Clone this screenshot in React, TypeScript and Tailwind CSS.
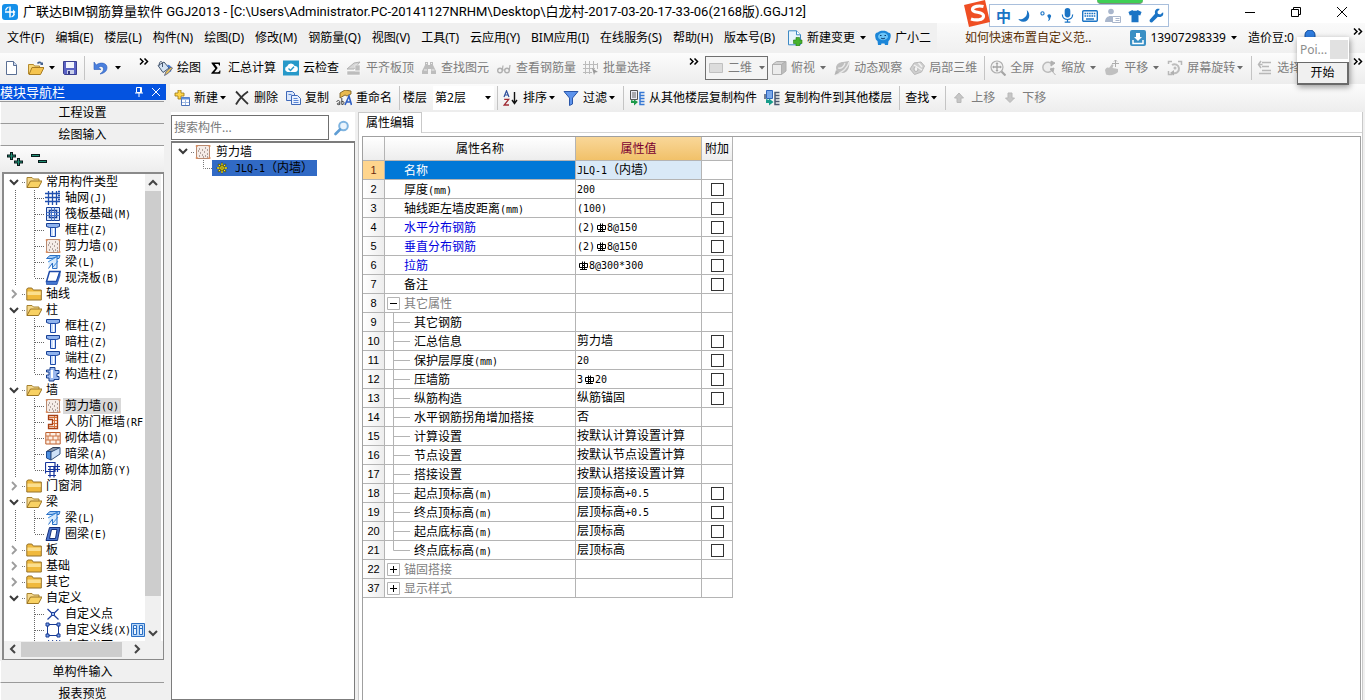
import React, { ReactNode } from "react";

/* ---------- text helpers ---------- */

/* Narrow fixed-pitch Latin beside 12px Chinese glyphs */
function Song({ children }: { children: string }) {
  const runs = children.split(/([\x21-\x7e]+|Φ)/).filter(Boolean);
  return (
    <>
      {runs.map((run, i) =>
        run === "Φ" ? (
          <Rebar key={i} />
        ) : /^[\x21-\x7e]+$/.test(run) ? (
          <span key={i} className="text-[10px] [font-family:'DejaVu_Sans_Mono',monospace]">{run}</span>
        ) : (
          <span key={i}>{run}</span>
        )
      )}
    </>
  );
}

function Rebar() {
  return (
    <svg viewBox="0 0 12 10" className="inline-block h-[10px] w-3 align-[-2px]" fill="none" stroke="#000">
      <path d="M2.500 2.500h8v4h-8zM5.500.5v8M7.500.5v8M3 8.500h7M5 4.500h3" />
    </svg>
  );
}

/* ---------- icons ---------- */

type IconName = keyof typeof icons;

const icons = {
  page: (
    <>
      <path d="M2.500 1.500h7l3 3.500v9.500h-10z" fill="#fff" stroke="#5a6f94" />
      <path d="M9.500 1.500v4h3.500" fill="#c7d6ee" stroke="#5a6f94" />
    </>
  ),
  open: (
    <>
      <path d="M9 3c1-2 4-2 5 0l1-1v3h-3l1-1c-1-1-2-1-3 0z" fill="#44618f" />
      <path d="M.5 14V4.500h5l1 1.500h5v2" fill="#f7d779" stroke="#b58a2c" />
      <path d="M1 14.500 4 7.500h12l-3.500 7z" fill="#f5c44f" stroke="#a97c22" />
    </>
  ),
  save: (
    <>
      <path d="M1.500 1.500h13v13h-12l-1-1z" fill="#5a62c4" stroke="#3b3f8f" />
      <path d="M4 2h8v6H4z" fill="#f2f4fc" />
      <path d="M5 10h7v4H5z" fill="#c9d0ea" />
      <path d="M6 11h2v3H6z" fill="#33377c" />
    </>
  ),
  undo: (
    <path d="M2 2v7.500h7L6.500 7.200c2.500-1.700 5-.6 5 1.800 0 2-1.500 3.500-3.500 5 4.500-.8 7-3 7-6.500C15 3 8.500 1.500 4.300 5z" fill="#4a80de" stroke="#2c5cb8" strokeWidth=".6" />
  ),
  paint: (
    <>
      <path d="M1 5.500 7 2l5 6-6 4.500z" fill="#d3e2f2" stroke="#44566f" />
      <path d="M2.500 5.500C1.500 2 4.500 0 5.500 3v4" fill="none" stroke="#44566f" />
      <path d="M10.500 5.500c3 .5 3.500 3 2.500 6" stroke="#3f78d0" strokeWidth="2.200" fill="none" />
      <path d="m15.500 8-4 5-4 2.500 1.500-4 5-4.500z" fill="#e8c15a" stroke="#4c5a88" strokeWidth=".8" />
    </>
  ),
  sigma: <path d="M3.500 2.500h8.500v3h-1c0-1-.5-1.500-1.500-1.500H6.700l3 4-3.300 4.200h3.400c1 0 1.500-.5 1.700-1.700h1l-.3 3.200H3.300v-.8L7.300 8.400 3.500 3.300z" fill="#000" />,
  cloud: (
    <>
      <path d="M0 .5h16v15H0z" fill="#2799c9" />
      <path d="M4.500 12a3 3 0 0 1-.3-5.800 4 4 0 0 1 7.500-.2 3 3 0 0 1 .3 6z" fill="#fff" />
      <path d="m5.500 8.500 2 2 3.500-3.700" fill="none" stroke="#2799c9" strokeWidth="1.400" />
    </>
  ),
  align: (
    <>
      <path d="m1 9 7-6 6-1-6 7z" fill="#d6d6d6" stroke="#b0b0b0" />
      <path d="M1 11h13v4H1zM9 5h5v6H9z" fill="#bdbdbd" stroke="#fff" strokeWidth=".5" />
    </>
  ),
  binoculars: (
    <>
      <path d="M4 2h3v3h2V2h3v3l3 6v3h-5V9H7v5H1v-3l3-6z" fill="#bdbdbd" />
      <path d="M3 10h3M10.500 10h3M5 3.500h1M10 3.500h1" stroke="#eee" />
    </>
  ),
  glasses: (
    <>
      <circle cx="4" cy="10.500" r="2.300" stroke="#b0b0b0" strokeWidth="1.400" />
      <circle cx="11" cy="10.500" r="2.300" stroke="#b0b0b0" strokeWidth="1.400" />
      <path d="M6.300 10.500 7 5.500M13.300 10.500 14 5M6 10h3" stroke="#b0b0b0" strokeWidth="1.200" />
    </>
  ),
  batch: (
    <>
      <path d="M2.500 1v13M6.500 1v13M10.500 1v9M0 4.500h15M0 8.500h12M0 12.500h9M14.500 3v6" stroke="#bbb" fill="none" />
      <path d="m9 8 6 4-3 .5L11 15z" fill="#999" />
    </>
  ),
  rect: <path d="M1.500 3.500h13v9h-13z" fill="#dcdcdc" stroke="#c0c0c0" />,
  cube: (
    <>
      <path d="M1.500 4.500h9v10h-9z" fill="#ececec" stroke="#b0b0b0" />
      <path d="m1.500 4.500 4-3h9.500l-4.500 3z" fill="#d0d0d0" stroke="#b0b0b0" />
      <path d="m10.500 4.500 4.500-3v9.500l-4.500 3.500z" fill="#bcbcbc" stroke="#b0b0b0" />
    </>
  ),
  orbit: (
    <>
      <path d="M2 8c0-4 4-6 7-6l6-1c1 4 0 12-7 12H3z" fill="#bebebe" />
      <path d="M1 15c4-1 12-5 14-13M4 8c3 1 6-1 7-5" fill="none" stroke="#e9e9e9" strokeWidth="1.300" />
      <path d="M.5 15 2 10l3 3z" fill="#b3b3b3" />
    </>
  ),
  local3d: (
    <>
      <path d="m1 9 4-6 7-1 3.500 4-3 6-7 2.500z" fill="#cfcfcf" stroke="#b8b8b8" />
      <ellipse cx="7" cy="9" rx="2" ry="2.500" fill="#f4f4f4" stroke="#b3b3b3" />
      <path d="m5 5 8 5M9.500 3 13 7" fill="none" stroke="#f3f3f3" strokeWidth="1.300" />
    </>
  ),
  fullscreen: (
    <>
      <circle cx="7" cy="7" r="6" fill="#f4f4f4" stroke="#b0b0b0" strokeWidth="1.200" />
      <path d="M7 3v8M3 7h8" stroke="#a5a5a5" strokeWidth="1.300" />
      <path d="m5.500 4 1.500-2 1.500 2zM5.500 10 7 12l1.500-2zM4 5.500 2 7l2 1.500zM10 5.500 12 7l-2 1.500z" fill="#a5a5a5" />
      <path d="m11.500 11.500 4 4" stroke="#a5a5a5" strokeWidth="2.200" />
    </>
  ),
  zoom: (
    <>
      <path d="M11 4.500A5 5 0 1 0 11 10" fill="#ededed" stroke="#bcbcbc" strokeWidth="1.500" />
      <path d="m10 1 4 2-4 3zM9 9l4-1-1 4zM10.500 10.500l4 4.500" fill="#b0b0b0" stroke="#b0b0b0" />
    </>
  ),
  pan: (
    <>
      <path d="M1 10c1-2 2-3 4-2l3-4 1.500 1L8.500 8 14 9v3c-2 3-9 4-12 2.500z" fill="#c0c0c0" />
      <path d="M11.500 0v7M8 3.500h7M10 1.500 11.500 0 13 1.500" stroke="#adadad" fill="none" />
    </>
  ),
  rotate: (
    <>
      <path d="M1.500 4V1.500H5M11 1.500h3.500V5M1.500 11v3.500h4" fill="none" stroke="#b8b8b8" strokeWidth="1.500" />
      <path d="M5 5a4.500 4.500 0 1 1 1 8" fill="none" stroke="#bdbdbd" strokeWidth="2" />
      <path d="m7 10-4 3 4 2.500z" fill="#b0b0b0" />
      <circle cx="8" cy="8" r="1.500" fill="#bdbdbd" />
    </>
  ),
  select: <path d="M5 2.500h9M5 6.500h7M5 10.500h9M2 13.500h12M4 1 1.500 4.500 4 8M1.500 4.500h4" fill="none" stroke="#b8b8b8" strokeWidth="1.500" />,
  create: (
    <>
      <path d="M4 0h3v3h3v3H7v3H4V6H1V3h3z" fill="#ffd54a" stroke="#9a7610" strokeWidth=".8" />
      <path d="M7.500 7.500h8v8h-8z" fill="#fff" stroke="#4c72b8" />
      <path d="M7.500 7.500h8v2h-8z" fill="#5f8fdc" />
      <path d="M8 12.500h7M11.500 10v5" stroke="#9db8e4" />
    </>
  ),
  remove: <path d="M2 1.500c3 3 7 8 12 12.500M14 1.500C9 5 5 9 2 14.500" fill="none" stroke="#333" strokeWidth="1.800" />,
  copy: (
    <>
      <path d="M1.500 1.500h6l2 2v7h-8z" fill="#dbe7fb" stroke="#3e68b8" />
      <path d="M6.500 5.500h6l3 3v6h-9z" fill="#e9f1ff" stroke="#3e68b8" />
      <path d="M8.500 8.500h4M8.500 10.500h5M8.500 12.500h5M3.500 4.500h3" stroke="#5b86d4" />
    </>
  ),
  rename: (
    <>
      <path d="M4 3 9 0l6 1v3l-4 2-2-1-5 3z" fill="#e8b94f" stroke="#6e5418" strokeWidth=".8" />
      <path d="M.8 12c0-2 3-2 3 0v2.500c-3 .8-4-1.500 0-1.500M5.800 8v6.500c3 .5 3-4 0-3" fill="none" stroke="#444" />
      <path d="M9 15 13 6l2.500 9M10 12h5" fill="none" stroke="#2f5fc4" strokeWidth="1.600" />
    </>
  ),
  sort: (
    <>
      <path d="M1 7 3.500.8 6 7M2 5h3" fill="none" stroke="#2f4f9c" strokeWidth="1.200" />
      <path d="M1.200 9.300h4.500L1.200 15h4.800" fill="none" stroke="#a02c34" strokeWidth="1.300" />
      <path d="M11.500 2v11M9 10l2.500 3.500L14 10" fill="none" stroke="#111" strokeWidth="1.400" />
    </>
  ),
  filter: <path d="M1 1.500h14L9.500 8v6l-3 1.500V8z" fill="#5d93ec" stroke="#2a56a8" />,
  fromFloor: (
    <>
      <path d="M1.500.5h7v9h-7z" fill="#ececf4" stroke="#555" />
      <path d="M3 3h4M3 5h4M3 7h4" stroke="#666" />
      <path d="M15.500 2.500H11v12h4.500M11 5.500h4.500M11 8.500h4.500M11 11.500h4.500" stroke="#3678d4" strokeWidth="1.500" fill="none" />
      <path d="M2 10v3h3v2.500L9 12 5 9.500V11z" fill="#1d9a4a" />
    </>
  ),
  toFloor: (
    <>
      <path d="M2.500.5h6v8h-6z" fill="#7ba8ea" stroke="#2f66bd" />
      <path d="M1 4v5M15.500 2.500H11v12h4.500M11 5.500h4.500M11 8.500h4.500M11 11.500h4.500" stroke="#4a5870" strokeWidth="1.500" fill="none" />
      <path d="M2 9v4h3v2.500L9.500 12 5 8.500V10z" fill="#189c8b" />
    </>
  ),
  up: <path d="M8 3 3.500 8H6v4.500h4V8h2.500z" fill="#c6c6c6" stroke="#b8b8b8" />,
  down: <path d="M8 12.500 3.500 8H6V3h4v5h2.500z" fill="#c6c6c6" stroke="#b8b8b8" />,
  change: (
    <>
      <path d="M1.500.8h8l4 4v10h-12z" fill="#e8f4fc" stroke="#3d89c4" />
      <path d="M9.500.8v4h4" fill="#fff" stroke="#3d89c4" />
      <path d="M9 7.500h3.500V10H15v3.500h-2.500V16H9v-2.500H6.500V10H9z" fill="#46b32d" stroke="#237a12" strokeWidth=".6" />
    </>
  ),
  mascot: (
    <>
      <path d="M3 2.500C4 0 12 0 13 2.500c3 0 3 3 2.500 5-.5 2-1 3-2 3.500L13 15h-3l-.5-1.500h-3L6 15H3l-.5-4C1 10 .5 9 .3 7 0 5 0 2.500 3 2.500z" fill="#1c86d8" />
      <ellipse cx="8" cy="6.500" rx="5" ry="3.700" fill="#6cc3f6" />
      <path d="M5 5.500h1.500M9.500 5.500H11M6 8c1 1 3 1 4 0" stroke="#0b3a6b" fill="none" />
    </>
  ),
  user: (
    <>
      <rect width="16" height="16" rx="2" fill="#3a8fc4" />
      <path d="M6 3h4v4h2l-4 4-4-4h2z" fill="#fff" />
      <path d="M3 10v3.500h10V10" fill="none" stroke="#fff" strokeWidth="1.500" />
    </>
  ),
  folderOpen: (
    <>
      <path d="M1 13.500v-10h5l1.500 1.500H13v3" fill="#f6d98c" stroke="#a5812f" />
      <path d="m1 13.500 3.500-6.500H16l-3.500 6.500z" fill="#f8d163" stroke="#9c7625" />
    </>
  ),
  folder: (
    <>
      <path d="M.8 14V3l1-1h4l1.500 2h8v10z" fill="#f0b93c" stroke="#96722a" />
      <path d="M1.500 5.500h13.200v3.500H1.500z" fill="#fbdf8f" />
    </>
  ),
  grid: <path d="M3.500 1v14M7.500 1v14M11.500 1v14M0 3.500h15M0 7.500h15M0 11.500h15M13 1.500h2M13 5.500h2M13 9.500h2" fill="none" stroke="#1f4fae" strokeWidth="1.300" />,
  raft: (
    <>
      <path d="M1.500 1.500h13v13h-13z" fill="#dbe8fb" stroke="#173f94" />
      <path d="M4.500 4.500h7v7h-7z" fill="#fff" stroke="#173f94" strokeWidth="1.500" />
      <path d="M6.500 1.500v13M9.500 1.500v13M1.500 6.500h13M1.500 9.500h13" stroke="#4472c8" />
    </>
  ),
  column: (
    <>
      <path d="M1.500 1.500h13v3l-3 1h-7l-3-1z" fill="#8fb3ee" stroke="#173f94" />
      <path d="M5.500 5.500h5v9h-5z" fill="#cfe0fb" stroke="#1c4bab" />
      <path d="M8.500 6v8" stroke="#fff" />
    </>
  ),
  wall: (
    <>
      <path d="M1.500 1.500h13v13h-13z" fill="#f5ece7" stroke="#b98a70" />
      <path d="M4 12h1M7 11h1M10 12h1M12 10h1M5 9h1M9 8h1M12 6h1M7 6h1M4 5h1M10 4h1M3 7h1M8 13h1M12 13h1" stroke="#6c5a55" />
      <path d="M.8 2h2M.8 14h2M13.500 2h2M13.500 14h2" stroke="#e08b55" strokeWidth="1.500" />
    </>
  ),
  beam: (
    <>
      <path d="M1.500 4.500 5 1.500h10l-1 3z" fill="#a5cdf7" stroke="#2a6fc4" />
      <path d="M4 4.500h3l5-2v12h-4.500V9l-4 5.500" fill="#d8eafc" stroke="#2a6fc4" />
      <path d="m3 8 10-6M8 13l5-6" stroke="#3f8fe0" />
    </>
  ),
  slab: (
    <>
      <path d="M4.500 1.500h10.500l-3.500 10H1.500z" fill="#fff" stroke="#1e4aa8" strokeWidth="1.500" />
      <path d="M1.500 11.500h10l3.500-10v4l-3 9H1.500z" fill="#4476cf" stroke="#1e4aa8" strokeWidth=".7" />
    </>
  ),
  structCol: (
    <>
      <path d="M5 1.500h5v3h4v3h-2v3h2v3H9v1.500H4v-3H1.500v-3H4v-3H1.500V4H5z" fill="#9db9ee" stroke="#163e8e" />
      <path d="M6 4h2v8H6z" fill="#fff" />
    </>
  ),
  airDoor: (
    <>
      <path d="M3.500 1.500h9v13h-9v-4h4v-5h-4z" fill="#fff2e6" stroke="#a83f12" strokeWidth="1.300" />
      <path d="M4 3.500h8M4 12.500h8M9.500 2v12M8 6.500h4M8 9.500h4" stroke="#d5703a" />
    </>
  ),
  brick: (
    <>
      <path d="M.8 2.500h14.400v11.500H.8z" fill="#fdf0e6" stroke="#bd5e2c" />
      <path d="M.8 6h14.400M.8 10h14.400M5 2.500V6M11 2.500V6M8 6v4M13 6v4M3 6v4M5 10v4M11 10v4" stroke="#cd7444" />
    </>
  ),
  darkBeam: (
    <>
      <path d="M1.500 5.500 8 1.500h7l-6 4z" fill="#8794a8" stroke="#303c52" />
      <path d="M1.500 5.500H6v8.500l-4.500-2z" fill="#4c8fe0" stroke="#1f4a92" />
      <path d="m6 6 9-4.500V8l-9 6z" fill="#cfe1f7" stroke="#35507c" />
    </>
  ),
  brickBar: (
    <path d="M.5.500v11M.5.500H10v9H.5M5 4v11.500M9 4v11.500M3 4.500h12M3 7.500h12M3 13.500h8M12.500 2v8" fill="none" stroke="#16349c" strokeWidth="1.200" />
  ),
  ringBeam: (
    <>
      <path d="M4.500 1.500h10.500l-2.500 13H1z" fill="#4c74cc" stroke="#142f7a" />
      <path d="M6.500 3.500H12l-1.500 9H4.500z" fill="#fff" stroke="#142f7a" />
    </>
  ),
  point: (
    <>
      <path d="m2.500 3 11 10.500M13.500 3 2.500 13.500" stroke="#1f3f9c" strokeWidth="1.200" />
      <path d="M6.500 6.500h3v3h-3z" fill="#9bc0f5" stroke="#1f3f9c" />
    </>
  ),
  line: (
    <>
      <path d="M2.500 2.500h11v11h-11z" fill="none" stroke="#183b94" />
      <path d="M1 1h3v3H1zM12 1h3v3h-3zM1 12h3v3H1zM12 12h3v3h-3z" fill="#7fa7ea" stroke="#183b94" />
    </>
  ),
  hatch: <path d="m1 6 3-4M5 6l3-4M9 6l3-4M13 6l2-4M1 10 4 6" stroke="#183b94" fill="none" />,
  gear: (
    <>
      <path d="M8 1v14M1 8h14M3 3l10 10M13 3 3 13" stroke="#2c2c00" strokeWidth="2.800" />
      <path d="M8 1.500v13M1.500 8h13M3.500 3.500l9 9M12.500 3.500l-9 9" stroke="#fff02e" strokeWidth="1.700" />
      <circle cx="8" cy="8" r="3" fill="#fff02e" stroke="#2c2c00" />
      <circle cx="8" cy="8" r="1" fill="#2c2c00" />
    </>
  ),
  search: (
    <>
      <circle cx="9.500" cy="6" r="4.300" fill="#eaf4fd" stroke="#7fb4e0" strokeWidth="2" />
      <path d="m6 9.500-4.500 4.500" stroke="#5f9dd4" strokeWidth="2.600" strokeLinecap="round" />
    </>
  ),
  appLogo: (
    <>
      <rect width="16" height="16" rx="3" fill="#1590ea" />
      <path d="M8 2.500v11M3 8h9" fill="none" stroke="#fff" strokeWidth="1.500" />
      <path d="M12.500 9.500A5 5 0 0 1 9.500 13M3.500 6.500A5 5 0 0 1 6.500 3" fill="none" stroke="#fff" strokeWidth="1.300" />
      <path d="m11 5.500 2.500 2.500-2.500 2.500z" fill="#fff" />
    </>
  ),
  moon: <path d="M10 1c5 4 3.500 13.500-4 13.500-3 0-5-1.500-5.500-3C6 12.500 12 8 10 1z" fill="#1b74c5" />,
  punct: (
    <>
      <circle cx="4" cy="5" r="1.800" fill="none" stroke="#1b74c5" strokeWidth="1.300" />
      <path d="M9.500 8a2.200 2.200 0 1 1 3.500 2c0 2-1 3.500-3 4 1-1.200 1.300-2.200 1-3.500z" fill="#1b74c5" />
    </>
  ),
  mic: (
    <>
      <rect x="5" y="0" width="6" height="10" rx="3" fill="#1b74c5" />
      <path d="M2.500 7c0 7 11 7 11 0M8 12v3M5 15h6" fill="none" stroke="#1b74c5" strokeWidth="1.300" />
    </>
  ),
  keyboard: (
    <>
      <rect x=".7" y="2.700" width="14.600" height="10.600" rx="1" fill="#fff" stroke="#1b74c5" strokeWidth="1.400" />
      <path d="M2.500 5.500h11M2.500 8h11" stroke="#1b74c5" strokeWidth="1.600" strokeDasharray="1.600 .7" />
      <path d="M4 11h8" stroke="#1b74c5" strokeWidth="1.500" />
    </>
  ),
  person: (
    <>
      <circle cx="6" cy="3.500" r="2.800" fill="#a9b6cc" />
      <path d="M0 14c0-8 11-8 12 0z" fill="#a9b6cc" />
      <path d="M7.500 8.500h8v6h-8z" fill="#fff" stroke="#a9b6cc" />
      <path d="M10.500 10.500h4M10.500 12.500h4" stroke="#a9b6cc" />
    </>
  ),
  shirt: <path d="M5 1c1 1.500 5 1.500 6 0l4.500 2.500-1.500 4-2-.7V15H4V6.800l-2 .7-1.500-4z" fill="#1b74c5" />,
  wrench: <path d="M15 4.500 12 7 9.500 6 9 4l2.500-3C8 0 5.500 2.500 6.500 6L.8 12.500c-.8 2 1 3.500 2.700 2.700L9.500 9.300c4 1 6.500-1.300 5.500-4.800z" fill="#1b74c5" />,
};

function Icon({ name, className = "h-4 w-4" }: { name: IconName; className?: string }) {
  return (
    <svg viewBox="0 0 16 16" className={`shrink-0 ${className}`} fill="none" aria-hidden="true">
      {icons[name]}
    </svg>
  );
}

function Caret({ dim = false }: { dim?: boolean }) {
  return (
    <svg viewBox="0 0 8 4" className="h-1 w-2 shrink-0" aria-hidden="true">
      <path d="M1 0h6L4 3.500z" fill={dim ? "#6b6b6b" : "#000"} />
    </svg>
  );
}

function More() {
  return (
    <button aria-label="更多" className="flex h-3 w-3 shrink-0 items-center self-start">
      <svg viewBox="0 0 10 7" className="h-[7px] w-[10px]" fill="none" stroke="#000" strokeWidth="1.500">
        <path d="m1 .5 3 3-3 3M5.500.5l3 3-3 3" />
      </svg>
    </button>
  );
}

const Sep = () => <span className="-mr-0.5 h-6 w-px shrink-0 bg-[#c4c4c4]" />;

function Tool({ icon, label, menu, dim, tight }: { icon?: IconName; label: string; menu?: boolean; dim?: boolean; tight?: boolean }) {
  return (
    <button className={`flex shrink-0 items-center whitespace-nowrap ${dim ? "text-[#7d7d7d]" : "text-black"}`}>
      {icon && <Icon name={icon} className="mr-1 h-4 w-4" />}
      {label}
      {menu && (
        <span className={tight ? "ml-px" : "ml-1"}>
          <Caret dim={dim} />
        </span>
      )}
    </button>
  );
}

/* ---------- top bars ---------- */

function TitleBar() {
  return (
    <header className="flex h-[23px] shrink-0 items-center bg-white pl-0.5">
      <Icon name="appLogo" />
      <h1 className="ml-[5px] whitespace-nowrap text-[13px] font-normal [font-family:'Roboto','Noto_Sans_CJK_SC',sans-serif]">
        广联达BIM钢筋算量软件 GGJ2013 - [C:\Users\Administrator.PC-20141127NRHM\Desktop\白龙村-2017-03-20-17-33-06(2168版).GGJ12]
      </h1>
      <div className="ml-auto flex">
        <button aria-label="最小化" className="flex h-5 w-[46px] items-center justify-center">
          <svg viewBox="0 0 10 10" className="h-[10px] w-[10px]" stroke="#000"><path d="M0 5.500h10" /></svg>
        </button>
        <button aria-label="还原" className="flex h-5 w-[46px] items-center justify-center">
          <svg viewBox="0 0 10 10" className="h-[10px] w-[10px]" stroke="#000" fill="none"><path d="M.5 2.500h7v7h-7zM2.500 2.500v-2h7v7h-2" /></svg>
        </button>
        <button aria-label="关闭" className="flex h-5 w-[46px] items-center justify-center">
          <svg viewBox="0 0 10 10" className="h-[10px] w-[10px]" stroke="#000" fill="none"><path d="m0 0 10 10M10 0 0 10" /></svg>
        </button>
      </div>
    </header>
  );
}

const menus = ["文件(F)", "编辑(E)", "楼层(L)", "构件(N)", "绘图(D)", "修改(M)", "钢筋量(Q)", "视图(V)", "工具(T)", "云应用(Y)", "BIM应用(I)", "在线服务(S)", "帮助(H)", "版本号(B)"];

function MenuBar() {
  return (
    <nav className="flex h-[30px] shrink-0 items-center bg-[#f0f0f0] pl-[7px]">
      <div className="flex shrink-0 items-center gap-[11px]">
        {menus.map((m) => (
          <button key={m} className="whitespace-nowrap">{m}</button>
        ))}
      </div>
      <div className="ml-3 flex shrink-0 items-center gap-2">
        <Tool icon="change" label="新建变更" menu />
        <Tool icon="mascot" label="广小二" />
      </div>
      <div className="ml-auto flex h-full w-[428px] shrink-0 items-center bg-linear-to-b from-[#fafafa] to-[#f0f0f0] pl-7">
        <a href="#help" className="whitespace-nowrap text-[#5a3005]">如何快速布置自定义范..</a>
        <div className="ml-auto flex items-center gap-[10px]">
          <Tool icon="user" label="13907298339" menu />
          <span className="whitespace-nowrap">造价豆:0</span>
          <svg viewBox="0 0 12 12" className="mr-[37px] h-3 w-3 self-start" aria-hidden="true">
            <path d="M1 12V5a5 5 0 0 1 10 0v7z" fill="#2f7de0" stroke="#114a96" />
          </svg>
        </div>
        <span className="flex h-full pt-0.5"><More /></span>
      </div>
    </nav>
  );
}

const bar = "bg-linear-to-b from-[#fcfcfc] to-[#ededed]";

function MainToolbar() {
  return (
    <div className={`flex h-[31px] shrink-0 items-center overflow-hidden pb-0.5 ${bar}`}>
      <div className="flex w-[157px] shrink-0 items-center pl-1">
        <button aria-label="新建"><Icon name="page" /></button>
        <button aria-label="打开" className="ml-2 flex items-center gap-1"><Icon name="open" /><Caret /></button>
        <button aria-label="保存" className="ml-1.5"><Icon name="save" /></button>
        <span className="mx-1.5 flex"><Sep /></span>
        <button aria-label="撤销" className="ml-0.5 flex items-center gap-1.5"><Icon name="undo" /><Caret /></button>
        <span className="ml-auto flex h-6 pr-1.5"><More /></span>
      </div>
      <div className="flex shrink-0 items-center gap-[7px]">
        <Tool icon="paint" label="绘图" />
        <Tool icon="sigma" label="汇总计算" />
        <Tool icon="cloud" label="云检查" />
        <Tool icon="align" label="平齐板顶" dim />
        <Tool icon="binoculars" label="查找图元" dim />
        <Tool icon="glasses" label="查看钢筋量" dim />
        <Tool icon="batch" label="批量选择" dim />
      </div>
      <span className="ml-[38px] flex h-6"><More /></span>
      <div className="ml-1 flex min-w-0 flex-1 items-center gap-[7px] overflow-hidden">
        <label className="-mr-1 flex h-6 w-[63px] shrink-0 items-center border border-[#6f6f6f] bg-[#f4f4f4] pl-0.5 pr-0.5 text-[#7d7d7d]">
          <Icon name="rect" className="mr-1 h-4 w-4" />
          <select aria-label="视图模式" className="w-[30px] shrink-0 appearance-none bg-transparent outline-none">
            <option>二维</option>
          </select>
          <Caret dim />
        </label>
        <Tool icon="cube" label="俯视" menu dim />
        <Tool icon="orbit" label="动态观察" dim />
        <Tool icon="local3d" label="局部三维" dim />
        <Sep />
        <Tool icon="fullscreen" label="全屏" dim />
        <Tool icon="zoom" label="缩放" menu dim />
        <Tool icon="pan" label="平移" menu dim />
        <Tool icon="rotate" label="屏幕旋转" menu dim tight />
        <Sep />
        <Tool icon="select" label="选择" dim />
      </div>
      <span className="ml-4 flex h-6"><More /></span>
    </div>
  );
}

function PartToolbar() {
  return (
    <div className={`flex h-7 shrink-0 items-center gap-[7px] overflow-hidden pl-1 ${bar}`}>
      <Tool icon="create" label="新建" menu tight />
      <Tool icon="remove" label="删除" />
      <Tool icon="copy" label="复制" />
      <Tool icon="rename" label="重命名" />
      <Sep />
      <label className="-ml-0.5 -mr-1 flex shrink-0 items-center">
        楼层
        <span className="ml-1.5 flex h-6 w-[61px] items-center bg-white pl-0.5">
          <select defaultValue="第2层" className="w-[49px] appearance-none bg-transparent outline-none">
            <option>第1层</option>
            <option>第2层</option>
          </select>
          <Caret />
        </span>
      </label>
      <Sep />
      <Tool icon="sort" label="排序" menu tight />
      <Tool icon="filter" label="过滤" menu tight />
      <Sep />
      <Tool icon="fromFloor" label="从其他楼层复制构件" />
      <Tool icon="toFloor" label="复制构件到其他楼层" />
      <Sep />
      <Tool label="查找" menu tight />
      <Sep />
      <Tool icon="up" label="上移" dim />
      <Tool icon="down" label="下移" dim />
    </div>
  );
}

/* ---------- navigation tree ---------- */

type Node = { label: string; open?: boolean; icon?: IconName; last?: boolean; selected?: boolean; badge?: boolean; lastGroup?: boolean };

const tree: Node[] = [
  { label: "常用构件类型", open: true },
  { label: "轴网(J)", icon: "grid" },
  { label: "筏板基础(M)", icon: "raft" },
  { label: "框柱(Z)", icon: "column" },
  { label: "剪力墙(Q)", icon: "wall" },
  { label: "梁(L)", icon: "beam" },
  { label: "现浇板(B)", icon: "slab", last: true },
  { label: "轴线", open: false },
  { label: "柱", open: true },
  { label: "框柱(Z)", icon: "column" },
  { label: "暗柱(Z)", icon: "column" },
  { label: "端柱(Z)", icon: "column" },
  { label: "构造柱(Z)", icon: "structCol", last: true },
  { label: "墙", open: true },
  { label: "剪力墙(Q)", icon: "wall", selected: true },
  { label: "人防门框墙(RF", icon: "airDoor" },
  { label: "砌体墙(Q)", icon: "brick" },
  { label: "暗梁(A)", icon: "darkBeam" },
  { label: "砌体加筋(Y)", icon: "brickBar", last: true },
  { label: "门窗洞", open: false },
  { label: "梁", open: true },
  { label: "梁(L)", icon: "beam" },
  { label: "圈梁(E)", icon: "ringBeam", last: true },
  { label: "板", open: false },
  { label: "基础", open: false },
  { label: "其它", open: false },
  { label: "自定义", open: true },
  { label: "自定义点", icon: "point", lastGroup: true },
  { label: "自定义线(X)", icon: "line", badge: true, lastGroup: true },
  { label: "自定义面", icon: "hatch", lastGroup: true },
];

function TreeRow({ node }: { node: Node }) {
  if (!node.icon) {
    return (
      <li>
        <button className="flex h-4 items-center whitespace-nowrap">
          <svg viewBox="0 0 22 16" className="h-4 w-[22px] shrink-0" fill="none" aria-hidden="true">
            <path d="M18 8.500h4" stroke="#777" strokeDasharray="1 1" />
            {node.open ? (
              <path d="m6 6 4 4 4-4" stroke="#3a3a3a" strokeWidth="2" />
            ) : (
              <path d="m8 4 4 4-4 4" stroke="#9c9c9c" strokeWidth="1.800" />
            )}
          </svg>
          <Icon name={node.open ? "folderOpen" : "folder"} className="mr-1 h-4 w-4" />
          <Song>{node.label}</Song>
        </button>
      </li>
    );
  }
  return (
    <li>
      <button className="flex h-4 items-center whitespace-nowrap">
        <svg viewBox="0 0 41 16" className="h-4 w-[41px] shrink-0" fill="none" stroke="#666" strokeDasharray="1 1" aria-hidden="true">
          {!node.lastGroup && <path d="M11.500 0v16" />}
          <path d={node.last ? "M30.500 0v8" : "M30.500 0v16"} />
          <path d="M31 8.500h10" />
        </svg>
        <Icon name={node.icon} className="mr-0.5 h-4 w-4" />
        <span className={`flex h-4 items-center px-0.5 ${node.selected ? "bg-[#d9d9d9]" : ""}`}>
          <span><Song>{node.label}</Song></span>
        </span>
        {node.badge && (
          <svg viewBox="0 0 14 14" className="-ml-0.5 h-[14px] w-[14px] shrink-0" aria-hidden="true">
            <path d="M.5.5h13v13H.5z" fill="#b9d7f8" stroke="#2a6fc4" />
            <path d="M2.500 2.500h3v9h-3zM8.500 2.500h3v9h-3zM2.500 5.500h3M8.500 5.500h3" fill="#eaf3fd" stroke="#2a6fc4" />
          </svg>
        )}
      </button>
    </li>
  );
}

function Chevron({ d }: { d: string }) {
  return (
    <svg viewBox="0 0 10 10" className="h-[10px] w-[10px]" fill="none" stroke="#444" strokeWidth="2" aria-hidden="true">
      <path d={d} />
    </svg>
  );
}

function PanelButton({ children }: { children: ReactNode }) {
  return (
    <button className="h-[22px] w-full shrink-0 border-b border-l border-[#9a9a9a] border-l-white bg-[#f0f0f0] text-center">{children}</button>
  );
}

function NavPanel() {
  return (
    <aside className="flex w-[166px] shrink-0 flex-col overflow-hidden">
      <div className="flex h-4 shrink-0 items-center bg-[#0453e0] leading-4 text-white">
        <h2 className="whitespace-nowrap text-[13px] font-normal">模块导航栏</h2>
        <button aria-label="固定" className="ml-auto">
          <svg viewBox="0 0 10 10" className="h-[10px] w-[10px]" fill="none" stroke="#fff" aria-hidden="true">
            <path d="M2.500.5h5v5h-5zM6.500 1v4M1 6h8M5 6v4" />
          </svg>
        </button>
        <button aria-label="关闭面板" className="ml-2 mr-1.5">
          <svg viewBox="0 0 8 8" className="h-2 w-2" stroke="#fff" aria-hidden="true"><path d="m0 0 8 8M8 0 0 8" /></svg>
        </button>
      </div>
      <div className="flex min-h-0 flex-1 flex-col pr-0.5">
        <div className="mt-px shrink-0 border-t border-[#9a9a9a]">
          <PanelButton>工程设置</PanelButton>
          <PanelButton>绘图输入</PanelButton>
        </div>
        <div className={`flex h-[26px] shrink-0 items-center gap-2 pl-[7px] ${bar}`}>
          <button aria-label="全部展开">
            <svg viewBox="0 0 16 16" className="h-4 w-4" fill="none" aria-hidden="true">
              <path d="M0 5h9M4.500 1v8M7 11h9M11.500 7v8" stroke="#0a1a1a" strokeWidth="3" />
              <path d="M1 5h7M4.500 2v6M8 11h7M11.500 8v6" stroke="#1f8f74" />
            </svg>
          </button>
          <button aria-label="全部折叠">
            <svg viewBox="0 0 16 16" className="h-4 w-4" fill="none" aria-hidden="true">
              <path d="M0 4.500h9M7 10.500h9" stroke="#0a1a1a" strokeWidth="3" />
              <path d="M1 4.500h7M8 10.500h7" stroke="#1f8f74" />
            </svg>
          </button>
        </div>
        <div className="ml-0.5 flex min-h-0 flex-1 flex-col border-2 border-r border-b border-[#8a8a8a] bg-white">
          <div className="flex min-h-0 flex-1">
            <ul className="min-w-0 flex-1 overflow-hidden">
              {tree.map((n, i) => <TreeRow key={i} node={n} />)}
            </ul>
            <div className="mr-0.5 flex w-4 shrink-0 flex-col items-center bg-[#f0f0f0]">
              <button aria-label="向上滚动" className="flex h-[17px] items-center"><Chevron d="m1 7 4-4 4 4" /></button>
              <div className="w-full flex-[404] bg-[#cdcdcd]" />
              <div className="flex-[28]" />
              <button aria-label="向下滚动" className="flex h-[17px] items-center"><Chevron d="m1 3 4 4 4-4" /></button>
            </div>
          </div>
          <div className="flex h-[18px] shrink-0 items-center bg-[#f0f0f0] pb-0.5">
            <button aria-label="向左滚动" className="flex w-[17px] justify-center"><Chevron d="M7 1 3 5l4 4" /></button>
            <div className="h-[15px] flex-[102] bg-[#cdcdcd]" />
            <div className="flex-[6]" />
            <button aria-label="向右滚动" className="mr-[18px] flex w-[17px] justify-center"><Chevron d="m3 1 4 4-4 4" /></button>
          </div>
        </div>
        <div className="mt-px h-[39px] shrink-0">
          <PanelButton>单构件输入</PanelButton>
          <PanelButton>报表预览</PanelButton>
        </div>
      </div>
    </aside>
  );
}

/* ---------- component list ---------- */

function PartList() {
  return (
    <section className="flex w-[185px] shrink-0 flex-col pl-px">
      <div className="flex h-[29px] shrink-0 items-end bg-white pb-px">
        <label className="flex h-[25px] w-[158px] items-center border border-[#6f6f6f] bg-white">
          <input type="text" aria-label="搜索构件" placeholder="搜索构件..." className="w-full bg-transparent pl-0.5 text-[12px] outline-none placeholder:text-[#7a7a7a]" />
        </label>
        <button aria-label="搜索" className="flex h-[25px] flex-1 items-center justify-center"><Icon name="search" /></button>
      </div>
      <ul className="flex-1 border border-t-2 border-[#7c7c7c] bg-white pt-px">
        <li>
          <button className="flex h-4 items-center">
            <svg viewBox="0 0 22 16" className="h-4 w-[22px]" fill="none" aria-hidden="true">
              <path d="m7 5 4 4 4-4" stroke="#3a3a3a" strokeWidth="2" />
              <path d="M19 8.500h3" stroke="#777" strokeDasharray="1 1" />
            </svg>
            <Icon name="wall" className="ml-px mr-[5px] h-4 w-4" />
            剪力墙
          </button>
        </li>
        <li className="flex h-4">
          <svg viewBox="0 0 40 16" className="h-4 w-10 shrink-0" fill="none" stroke="#777" strokeDasharray="1 1" aria-hidden="true">
            <path d="M31.500 0v8.500H40" />
          </svg>
          <button className="flex h-4 w-[105px] items-center whitespace-nowrap bg-[#316ac5] pl-1">
            <Icon name="gear" className="mr-[7px] h-3 w-3" />
            <span><Song>JLQ-1（内墙）</Song></span>
          </button>
        </li>
      </ul>
    </section>
  );
}

/* ---------- property grid ---------- */

type Row = { n: number; name: string; value?: string; box?: boolean; kind?: "blue" | "child" | "end" | "minus" | "plus" };

const rows: Row[] = [
  { n: 1, name: "名称", value: "JLQ-1（内墙）" },
  { n: 2, name: "厚度(mm)", value: "200", box: true },
  { n: 3, name: "轴线距左墙皮距离(mm)", value: "(100)", box: true },
  { n: 4, name: "水平分布钢筋", value: "(2)Φ8@150", box: true, kind: "blue" },
  { n: 5, name: "垂直分布钢筋", value: "(2)Φ8@150", box: true, kind: "blue" },
  { n: 6, name: "拉筋", value: "Φ8@300*300", box: true, kind: "blue" },
  { n: 7, name: "备注", box: true },
  { n: 8, name: "其它属性", kind: "minus" },
  { n: 9, name: "其它钢筋", kind: "child" },
  { n: 10, name: "汇总信息", value: "剪力墙", box: true, kind: "child" },
  { n: 11, name: "保护层厚度(mm)", value: "20", box: true, kind: "child" },
  { n: 12, name: "压墙筋", value: "3Φ20", box: true, kind: "child" },
  { n: 13, name: "纵筋构造", value: "纵筋锚固", box: true, kind: "child" },
  { n: 14, name: "水平钢筋拐角增加搭接", value: "否", kind: "child" },
  { n: 15, name: "计算设置", value: "按默认计算设置计算", kind: "child" },
  { n: 16, name: "节点设置", value: "按默认节点设置计算", kind: "child" },
  { n: 17, name: "搭接设置", value: "按默认搭接设置计算", kind: "child" },
  { n: 18, name: "起点顶标高(m)", value: "层顶标高+0.5", box: true, kind: "child" },
  { n: 19, name: "终点顶标高(m)", value: "层顶标高+0.5", box: true, kind: "child" },
  { n: 20, name: "起点底标高(m)", value: "层顶标高", box: true, kind: "child" },
  { n: 21, name: "终点底标高(m)", value: "层顶标高", box: true, kind: "end" },
  { n: 22, name: "锚固搭接", kind: "plus" },
  { n: 37, name: "显示样式", kind: "plus" },
];

const cell = "h-[19px] border-b border-r border-[#b4b4b4] p-0 font-normal";

function NameCell({ row }: { row: Row }) {
  const { kind } = row;
  if (kind === "child" || kind === "end") {
    return (
      <div className="flex h-[18px] items-center text-black">
        <svg viewBox="0 0 29 19" className="h-[19px] w-[29px] shrink-0" fill="none" stroke="#b4b4b4" aria-hidden="true">
          <path d={kind === "end" ? "M8.500 0v9.500H25" : "M8.500 0v19M8.500 9.500H25"} />
        </svg>
        <span className="pt-0.5"><Song>{row.name}</Song></span>
      </div>
    );
  }
  if (kind === "minus" || kind === "plus") {
    return (
      <div className="flex h-[18px] items-center text-[#7f7f7f]">
        <button aria-label={kind === "plus" ? "展开" : "折叠"} className="ml-0.5 mr-1 h-[13px] w-[13px]">
          <svg viewBox="0 0 13 13" className="h-[13px] w-[13px]" fill="#fff" aria-hidden="true">
            <path d="M.5.5h12v12H.5z" stroke="#b4b4b4" />
            <path d={kind === "plus" ? "M3 6.500h7M6.500 3v7" : "M3 6.500h7"} stroke="#000" />
          </svg>
        </button>
        <span className="pt-0.5">{row.name}</span>
      </div>
    );
  }
  return (
    <div className={`flex h-[18px] items-center pl-[19px] ${row.n === 1 ? "bg-[#0078d7] text-white" : kind === "blue" ? "text-[#0000e0]" : "text-black"}`}>
      <span className="pt-0.5"><Song>{row.name}</Song></span>
    </div>
  );
}

function PropertyGrid() {
  return (
    <table className="table-fixed border-separate border-spacing-0 text-[12px] leading-4">
      <colgroup>
        <col className="w-[22px]" />
        <col className="w-[191px]" />
        <col className="w-[126px]" />
        <col className="w-[31px]" />
      </colgroup>
      <thead>
        <tr>
          <th className="h-6 border-b border-r border-[#b4b4b4] bg-linear-to-b from-white to-[#ededed] p-0" />
          <th className="h-6 border-b border-r border-[#b4b4b4] bg-linear-to-b from-white to-[#ededed] p-0 font-normal">属性名称</th>
          <th className="h-6 border-b border-r border-[#b4b4b4] bg-linear-to-b from-[#f9d798] to-[#f1c169] p-0 font-normal text-[#7a0030]">属性值</th>
          <th className="h-6 whitespace-nowrap border-b border-r border-[#b4b4b4] bg-linear-to-b from-white to-[#ededed] p-0 font-normal">附加</th>
        </tr>
      </thead>
      <tbody>
        {rows.map((r) => (
          <tr key={r.n}>
            <th className={`${cell} text-center text-[11px] [font-family:'Liberation_Sans',sans-serif] ${r.n === 1 ? "bg-[#ffd58d] text-[#6a2a10]" : "bg-linear-to-r from-white to-[#ededed]"}`}>{r.n}</th>
            <td className={cell}><NameCell row={r} /></td>
            <td className={`${cell} ${r.n === 1 ? "bg-[#d9e9f7]" : ""}`}>
              <div className="flex h-[18px] items-center whitespace-nowrap pl-px"><span><Song>{r.value ?? ""}</Song></span></div>
            </td>
            <td className={cell}>
              {r.box && <input type="checkbox" aria-label={`附加 ${r.name}`} className="mx-auto block h-[13px] w-[13px] appearance-none border border-[#333] bg-white" />}
            </td>
          </tr>
        ))}
      </tbody>
    </table>
  );
}

function PropertyPanel() {
  return (
    <section className="ml-[3px] mr-0.5 flex min-w-0 flex-1 flex-col border-l border-r border-[#c9c9c9] bg-white">
      <div className="flex h-[21px] shrink-0 items-stretch bg-white">
        <button role="tab" aria-selected="true" className="w-[63px] border-r border-t border-[#c9c9c9] text-center">属性编辑</button>
        <span className="flex-1 border-b border-[#d4d4d4]" />
      </div>
      <div className="ml-[3px] mr-px mt-[3px] min-h-0 flex-1 overflow-hidden border border-b-0 border-[#a0a0a0]">
        <PropertyGrid />
      </div>
    </section>
  );
}

/* ---------- floating windows ---------- */

function ImeBar() {
  return (
    <div className="absolute right-[196px] top-0 flex h-[27px] items-center">
      <div className="absolute right-[26px] top-0 h-1 w-[46px] rounded-b-lg border-b border-[#7d8a7d] bg-[#3fcf55]" />
      <svg viewBox="0 0 28 28" className="z-10 -mr-0.5 h-7 w-7" aria-hidden="true">
        <path d="M1 5 22 0l5 22-21 5z" fill="#ef4e23" />
        <path d="M20.500 6.500c-4-1-11-.5-11 3 0 4 11 1.500 11 6.500 0 4.500-8 4.500-12.500 3" fill="none" stroke="#fff" strokeWidth="3.200" />
      </svg>
      <div className="relative flex h-[23px] items-center gap-[7px] self-end border border-[#a9bfdc] bg-white pl-1.5 pr-1">
        <button className="text-[15px] font-bold leading-5 text-[#1b74c5]">中</button>
        <button aria-label="半角"><Icon name="moon" className="h-[14px] w-[14px]" /></button>
        <button aria-label="标点"><Icon name="punct" className="h-[14px] w-[14px]" /></button>
        <button aria-label="语音"><Icon name="mic" className="h-[15px] w-[15px]" /></button>
        <button aria-label="键盘"><Icon name="keyboard" /></button>
        <button aria-label="账户"><Icon name="person" /></button>
        <button aria-label="皮肤"><Icon name="shirt" className="h-[14px] w-[14px]" /></button>
        <button aria-label="设置"><Icon name="wrench" className="h-[15px] w-[15px]" /></button>
      </div>
    </div>
  );
}

function MiniWindow() {
  return (
    <div className="absolute right-4 top-[37px] w-[52px] bg-white shadow-[1px_2px_6px_rgba(0,0,0,0.4)]">
      <div className="flex h-[25px] items-center justify-between pl-[3px] text-[#8d8d8d]">
        Poi...
        <button aria-label="关闭小窗" className="mr-px h-[19px] w-[18px] bg-[#e1e1e1]" />
      </div>
      <button className="h-[23px] w-full border-2 border-l border-t border-[#6a6a6a] bg-[#f0f0f0] leading-4 text-black">开始</button>
    </div>
  );
}

export default function App() {
  return (
    <div className="relative flex h-screen w-full flex-col overflow-hidden bg-[#f0f0f0] text-[12px] leading-4 text-black [font-family:'Noto_Sans','Noto_Sans_CJK_SC',sans-serif]">
      <TitleBar />
      <MenuBar />
      <MainToolbar />
      <main className="flex min-h-0 flex-1">
        <NavPanel />
        <div className="ml-1 flex min-w-0 flex-1 flex-col">
          <PartToolbar />
          <div className="flex min-h-0 flex-1">
            <PartList />
            <PropertyPanel />
          </div>
        </div>
      </main>
      <ImeBar />
      <MiniWindow />
    </div>
  );
}
